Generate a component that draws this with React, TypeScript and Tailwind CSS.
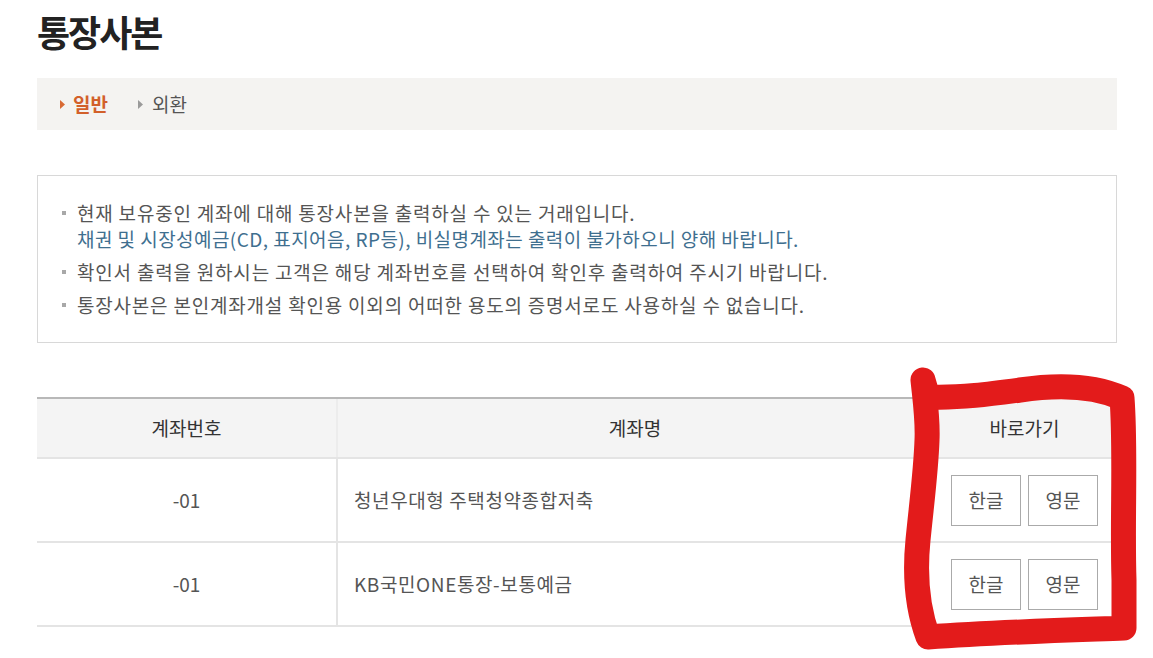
import React from "react";

const font = { fontFamily: '"Noto Sans CJK KR", "Noto Sans", sans-serif' };

const notices = [
  {
    text: "현재 보유중인 계좌에 대해 통장사본을 출력하실 수 있는 거래입니다.",
    sub: "채권 및 시장성예금(CD, 표지어음, RP등), 비실명계좌는 출력이 불가하오니 양해 바랍니다.",
  },
  { text: "확인서 출력을 원하시는 고객은 해당 계좌번호를 선택하여 확인후 출력하여 주시기 바랍니다." },
  { text: "통장사본은 본인계좌개설 확인용 이외의 어떠한 용도의 증명서로도 사용하실 수 없습니다." },
];

const accounts = [
  { no: "-01", name: "청년우대형 주택청약종합저축" },
  { no: "-01", name: "KB국민ONE통장-보통예금" },
];

function Triangle({ color }: { color: string }) {
  return (
    <svg width="5" height="9" viewBox="0 0 5 9" className="shrink-0">
      <path d="M0 0 L5 4.5 L0 9 Z" fill={color} />
    </svg>
  );
}

export default function App() {
  return (
    <div className="relative w-[1153px] h-[658px] overflow-hidden bg-white" style={font}>
      <div className="pl-[37px] pr-[36px]">
        <h1 className="pt-[7px] text-[36px] leading-[48px] font-bold text-[#222] tracking-[-2px]">통장사본</h1>

        <div className="mt-[23px] h-[52px] bg-[#f4f3f1] flex items-center pl-[23px] gap-[30px] text-[19px]">
          <div className="flex items-center gap-[8px]">
            <Triangle color="#d86a34" />
            <span className="font-bold text-[#d2602a]">일반</span>
          </div>
          <div className="flex items-center gap-[9px]">
            <Triangle color="#9a9a9a" />
            <span className="text-[#555]">외환</span>
          </div>
        </div>

        <div className="mt-[45px] h-[168px] border border-[#d8d8d8] pt-[24px] pl-[24px]">
          <ul className="flex flex-col gap-[7px] text-[19px] leading-[26px] tracking-[0.8px] text-[#555]">
            {notices.map((n, i) => (
              <li key={i} className="flex">
                <span className="w-[4px] h-[4px] bg-[#a8a8a8] mt-[11px] mr-[11px] shrink-0" />
                <div>
                  <p>{n.text}</p>
                  {n.sub && <p className="text-[#3f6f8f] tracking-[0.45px]">{n.sub}</p>}
                </div>
              </li>
            ))}
          </ul>
        </div>

        <div className="mt-[54px] border-t-2 border-[#b8b8b8] text-[19px]">
          <div className="grid grid-cols-[301px_594px_185px] h-[60px] bg-[#f4f4f4] text-[#333] border-b-2 border-[#e4e4e4]">
            <div className="flex items-center justify-center border-r-2 border-[#ececec]">계좌번호</div>
            <div className="flex items-center justify-center">계좌명</div>
            <div className="flex items-center justify-center">바로가기</div>
          </div>
          {accounts.map((a, i) => (
            <div key={i} className="grid grid-cols-[301px_594px_185px] h-[84px] text-[#555] border-b-2 border-[#e4e4e4]">
              <div className="flex items-center justify-center border-r-2 border-[#e4e4e4]">{a.no}</div>
              <div className="flex items-center pl-[16px] tracking-[0.6px]">{a.name}</div>
              <div className="flex items-center justify-center gap-[7px]">
                <button className="w-[70px] h-[51px] border border-[#aaa] bg-white text-[#555]">한글</button>
                <button className="w-[70px] h-[51px] border border-[#aaa] bg-white text-[#555]">영문</button>
              </div>
            </div>
          ))}
        </div>
      </div>

      <svg className="absolute left-0 top-0 pointer-events-none" width="1153" height="658" viewBox="0 0 1153 658">
        <path
          d="M923 380 C926 390 927 396 930 397 C960 398 990 394 1020 390 C1060 384 1095 386 1122 398 C1126 450 1122 520 1124 580 C1124 600 1124 615 1124 628 C1070 630 1000 632 928 637 C918 610 914 580 918 540 C922 500 926 470 927 440 C928 420 925 400 923 380"
          fill="none"
          stroke="#e31b1b"
          strokeWidth="25"
          strokeLinecap="round"
          strokeLinejoin="round"
        />
      </svg>
    </div>
  );
}
